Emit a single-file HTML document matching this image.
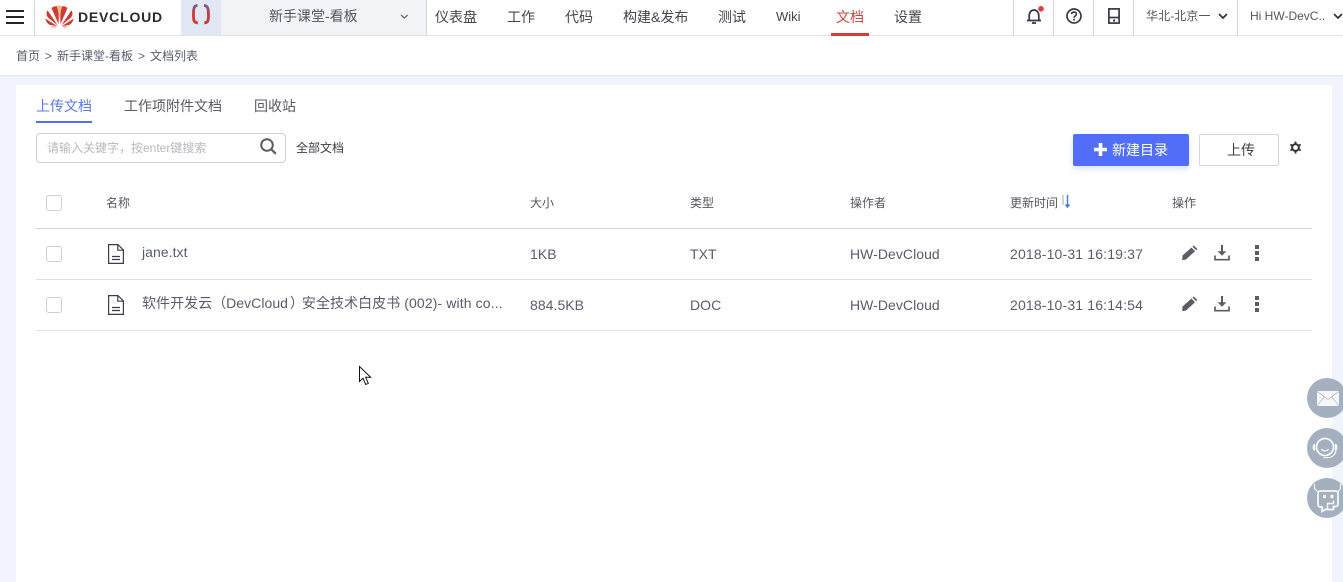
<!DOCTYPE html>
<html lang="zh"><head><meta charset="utf-8"><title>DevCloud</title>
<style>
*{box-sizing:border-box}
html,body{margin:0;padding:0;width:1343px;height:582px;overflow:hidden;background:#fff}
body{position:relative;font-family:"Liberation Sans","Noto Sans CJK SC",sans-serif;color:#43454f;font-size:13px}
.a{position:absolute;white-space:nowrap;line-height:18px}
.b{position:absolute}
.nav{top:8px;font-size:14px;color:#43454f}
.th{top:194px;font-size:12px;color:#555761}
.td{font-size:14px;color:#575d6c;letter-spacing:.05px}
.time{letter-spacing:.16px}
.bc{top:47px;font-size:12px;color:#575d6c}
.sep{position:absolute;top:0;width:1px;height:35px;background:#d4d4d6}
.cb{position:absolute;left:46px;width:16px;height:16px;border:1px solid #cfcfd3;border-radius:3px;background:#fff}
.p{letter-spacing:-2px}
svg{position:absolute;overflow:visible}
</style></head><body>

<!-- background -->
<div class="b" style="left:0;top:35px;width:1343px;height:1px;background:#e3e3e5"></div>
<div class="b" style="left:0;top:75px;width:1343px;height:507px;background:#f1f4fd"></div>
<div class="b" style="left:0;top:75px;width:1343px;height:1px;background:#e2e5f1"></div>
<div class="b" style="left:16px;top:85px;width:1316px;height:497px;background:#fff"></div>

<!-- header -->
<svg style="left:6px;top:10px" width="19" height="14"><path d="M0 1h18M0 7h18M0 13h18" stroke="#24262e" stroke-width="2"/></svg>
<div class="sep" style="left:34px"></div>
<svg style="left:45px;top:5px" width="29" height="22" viewBox="0 0 29 22">
<path d="M12.800 20.500 3 12.500C1 10 1.200 7 2.700 5.500Z" fill="#d3382f"/>
<path d="M13.500 19 6.500 3C8.500 1.400 10.800 1 12 1.500 13.800 7 14 13 13.500 19Z" fill="#d3382f"/>
<path d="M15.500 19C15 13 15.200 7 17 1.500 18.200 1 20.500 1.400 22.500 3Z" fill="#d3382f"/>
<path d="M16.200 20.500 26 12.500C28 10 27.800 7 26.300 5.500Z" fill="#d3382f"/>
<path d="M12 21 .3 13.500C.8 16 2.500 19 5 20Z" fill="#d3382f"/>
<path d="M17 21 28.700 13.500C28.200 16 26.500 19 24 20Z" fill="#d3382f"/>
<path d="M12.500 21.600H5.800c1.800 1 4.500.7 6.700 0ZM16.500 21.600h6.700c-1.800 1-4.500.7-6.700 0Z" fill="#d3382f"/>
<path d="M12.300 1.200C13.500.3 15.500.3 16.700 1.200 16 6 15 10 14.500 14 14 10 13 6 12.300 1.200Z" fill="#e8b98a"/>
</svg>
<div class="a" style="left:78px;top:8px;font-size:14px;font-weight:bold;letter-spacing:.8px;color:#2a2b31">DEVCLOUD</div>
<div class="b" style="left:181px;top:0;width:40px;height:35px;background:#e1e8f3"></div>
<div class="b" style="left:221px;top:0;width:205px;height:35px;background:#f1f4f6"></div>
<svg style="left:190px;top:4px" width="22" height="20" viewBox="0 0 22 20" fill="none">
<path d="M7.500 1.500C4.500 1.500 3.800 3.500 3.600 7 3.300 11 3.300 14 4 16.500 4.600 18.300 6 18.800 7.800 18.800" stroke="#cf3a34" stroke-width="2.800"/>
<path d="M14 1.500C17 1.500 18 3.500 18.300 7 18.600 11 18.600 14 18 16.500 17.400 18.300 16 18.800 14.300 18.800" stroke="#c63c3a" stroke-width="2.800"/>
<path d="M3.300 5.500C3.800 3 5 1.500 7 1.300M14.500 1.300C16.500 1.500 18 3 18.400 5.500" stroke="#3d6fc0" stroke-width="1.500"/>
<path d="M6.500 20.500h2M13.500 20.500h2" stroke="#c5ccd8" stroke-width="1"/>
</svg>
<div class="a" style="left:269px;top:7px;font-size:14px;color:#54565f">新手课堂-看板</div>
<svg style="left:400px;top:14px" width="9" height="6"><path d="M1 1l3.300 3L7.600 1" fill="none" stroke="#6d7078" stroke-width="1.400"/></svg>
<div class="sep" style="left:426px"></div>

<div class="a nav" style="left:435px">仪表盘</div>
<div class="a nav" style="left:507px">工作</div>
<div class="a nav" style="left:565px">代码</div>
<div class="a nav" style="left:623px">构建&amp;发布</div>
<div class="a nav" style="left:718px">测试</div>
<div class="a nav" style="left:776px;font-size:13px">Wiki</div>
<div class="a nav" style="left:836px;color:#c9473f">文档</div>
<div class="b" style="left:831px;top:33px;width:38px;height:3px;background:#d63b37"></div>
<div class="a nav" style="left:894px">设置</div>

<div class="sep" style="left:1013px"></div>
<div class="sep" style="left:1053px"></div>
<div class="sep" style="left:1093px"></div>
<div class="sep" style="left:1133px"></div>
<div class="sep" style="left:1237px"></div>
<svg style="left:1026px;top:6px" width="20" height="18" viewBox="0 0 20 18" fill="none">
<path d="M1 14.500h14M3.200 14.500V10C3.200 6.500 5 4 8 4s4.800 2.500 4.800 6v4.500M6 17h4" stroke="#363846" stroke-width="1.700"/>
<circle cx="15" cy="2.800" r="2.800" fill="#d9403a"/>
</svg>
<svg style="left:1066px;top:8px" width="16" height="16" viewBox="0 0 16 16" fill="none">
<circle cx="8" cy="8" r="7" stroke="#363846" stroke-width="1.700"/>
<path d="M5.600 6.200C5.700 4.800 6.700 4.100 8 4.100c1.400 0 2.400.8 2.400 2 0 1.700-2.400 1.800-2.400 3.600" stroke="#363846" stroke-width="1.600"/>
<rect x="7.200" y="10.800" width="1.700" height="1.700" fill="#363846"/>
</svg>
<svg style="left:1108px;top:8px" width="12" height="16" viewBox="0 0 12 16" fill="none">
<rect x=".9" y=".9" width="10.200" height="14.200" stroke="#363846" stroke-width="1.700"/>
<path d="M1 9.500h10" stroke="#363846" stroke-width="1.700"/>
<rect x="5" y="11.500" width="2" height="2" fill="#363846"/>
</svg>
<div class="a" style="left:1146px;top:7px;font-size:12px;letter-spacing:.1px;color:#54565f">华北-北京一</div>
<svg style="left:1218px;top:13px" width="10" height="7"><path d="M1 1l4 4 4-4" fill="none" stroke="#30323c" stroke-width="1.700"/></svg>
<div class="a" style="left:1250px;top:7px;font-size:12px;color:#54565f">Hi HW-DevC..</div>
<svg style="left:1333px;top:13px" width="10" height="7"><path d="M1 1l4 4 4-4" fill="none" stroke="#30323c" stroke-width="1.700"/></svg>

<!-- breadcrumb -->
<div class="a bc" style="left:16px">首页</div>
<div class="a bc" style="left:45px">&gt;</div>
<div class="a bc" style="left:57px">新手课堂-看板</div>
<div class="a bc" style="left:138px">&gt;</div>
<div class="a bc" style="left:150px">文档列表</div>

<!-- tabs -->
<div class="a" style="left:36px;top:97px;font-size:14px;color:#5a78f0">上传文档</div>
<div class="b" style="left:36px;top:121px;width:56px;height:2px;background:#526ef6"></div>
<div class="a" style="left:124px;top:97px;font-size:14px;color:#595a62">工作项附件文档</div>
<div class="a" style="left:254px;top:97px;font-size:14px;color:#595a62">回收站</div>

<!-- search -->
<div class="b" style="left:36px;top:133px;width:250px;height:30px;border:1px solid #cfcfd3;border-radius:4px;background:#fff"></div>
<div class="a" style="left:47px;top:139px;font-size:12px;color:#b8b9bd">请输入关键字，按enter键搜索</div>
<svg style="left:260px;top:138px" width="17" height="17" viewBox="0 0 17 17" fill="none">
<circle cx="7" cy="7" r="5.800" stroke="#5b5c66" stroke-width="2"/>
<path d="M11.500 11.500l4.300 4.300" stroke="#5b5c66" stroke-width="2.200"/>
</svg>
<div class="a" style="left:296px;top:139px;font-size:12px;color:#3c3d44">全部文档</div>

<!-- buttons -->
<div class="b" style="left:1073px;top:134px;width:116px;height:32px;background:#526ef9;border-radius:2px;box-shadow:0 3px 6px rgba(82,110,249,.2)"></div>
<svg style="left:1094px;top:143px" width="13" height="13"><path d="M6.500 0v13M0 6.500h13" stroke="#fff" stroke-width="3.600"/></svg>
<div class="a" style="left:1112px;top:141px;font-size:14px;color:#fff">新建目录</div>
<div class="b" style="left:1199px;top:134px;width:80px;height:32px;border:1px solid #d3d6dc;border-radius:2px;background:#fff"></div>
<div class="a" style="left:1227px;top:141px;font-size:14px;color:#3f4049">上传</div>
<svg style="left:1289px;top:141px" width="13" height="13" viewBox="0 0 13 13" fill="none">
<circle cx="6.500" cy="6.500" r="3.400" stroke="#32343e" stroke-width="2"/>
<path d="M6.500 .5v2M6.500 10.500v2M1.300 3.500l1.800 1M9.900 8.500l1.800 1M1.300 9.500l1.800-1M9.900 4.500l1.800-1" stroke="#32343e" stroke-width="1.800"/>
</svg>

<!-- table head -->
<div class="cb" style="top:195px"></div>
<div class="a th" style="left:106px">名称</div>
<div class="a th" style="left:530px">大小</div>
<div class="a th" style="left:690px">类型</div>
<div class="a th" style="left:850px">操作者</div>
<div class="a th" style="left:1010px">更新时间</div>
<svg style="left:1061px;top:194px" width="11" height="15" fill="none"><path d="M2 1v10" stroke="#c3c6cc" stroke-width="1.500"/><path d="M6.500 1v12M4.500 10.500l2 2.500 2-2.500" stroke="#4a7fd1" stroke-width="1.500"/></svg>
<div class="a th" style="left:1172px">操作</div>
<div class="b" style="left:36px;top:228px;width:1276px;height:1px;background:#d3d3da"></div>

<!-- row 1 -->
<div class="cb" style="top:246px"></div>
<svg style="left:108px;top:244px" width="16" height="20" viewBox="0 0 16 20" fill="none" stroke="#3c3e4d" stroke-width="1.200">
<path d="M.6.600h9.400l5.400 5.400v13.400H.6Z"/><path d="M9.800.6v5.600h5.600M4 12.500h8M4 15.500h8"/>
</svg>
<div class="a td" style="left:142px;top:243px">jane.txt</div>
<div class="a td" style="left:530px;top:245px">1KB</div>
<div class="a td" style="left:690px;top:245px">TXT</div>
<div class="a td" style="left:850px;top:245px">HW-DevCloud</div>
<div class="a td time" style="left:1010px;top:245px">2018-10-31 16:19:37</div>
<svg style="left:1181px;top:245px" width="17" height="16" viewBox="0 0 17 16"><path d="M1.500 10.500 10.500 2.500 14 6.200 5 14.500l-3.800.8ZM11.500 1.600l1.300-1.200 3.500 3.600-1.200 1.300Z" fill="#5b5d66"/></svg>
<svg style="left:1214px;top:245px" width="16" height="16" viewBox="0 0 16 16" fill="none"><path d="M8 0v9" stroke="#5b5d66" stroke-width="2"/><path d="M3.600 6.200 8 10.800l4.400-4.600Z" fill="#5b5d66"/><path d="M1 10.500v4.200h14v-4.200" stroke="#5b5d66" stroke-width="1.700"/></svg>
<svg style="left:1255px;top:245px" width="4" height="16"><path d="M0 0h4v4H0ZM0 6h4v4H0ZM0 12h4v4H0Z" fill="#5b5d66"/></svg>
<div class="b" style="left:36px;top:279px;width:1276px;height:1px;background:#e1e1e3"></div>

<!-- row 2 -->
<div class="cb" style="top:297px"></div>
<svg style="left:108px;top:295px" width="16" height="20" viewBox="0 0 16 20" fill="none" stroke="#3c3e4d" stroke-width="1.200">
<path d="M.6.600h9.400l5.400 5.400v13.400H.6Z"/><path d="M9.800.6v5.600h5.600M4 12.500h8M4 15.500h8"/>
</svg>
<div class="a td" style="left:142px;top:294px">软件开发云<span class="p">（ </span>DevCloud<span class="p"> ）</span>安全技术白皮书 <span style="letter-spacing:.12px">(002)- with co...</span></div>
<div class="a td" style="left:530px;top:296px">884.5KB</div>
<div class="a td" style="left:690px;top:296px">DOC</div>
<div class="a td" style="left:850px;top:296px">HW-DevCloud</div>
<div class="a td time" style="left:1010px;top:296px">2018-10-31 16:14:54</div>
<svg style="left:1181px;top:296px" width="17" height="16" viewBox="0 0 17 16"><path d="M1.500 10.500 10.500 2.500 14 6.200 5 14.500l-3.800.8ZM11.500 1.600l1.300-1.200 3.500 3.600-1.200 1.300Z" fill="#5b5d66"/></svg>
<svg style="left:1214px;top:296px" width="16" height="16" viewBox="0 0 16 16" fill="none"><path d="M8 0v9" stroke="#5b5d66" stroke-width="2"/><path d="M3.600 6.200 8 10.800l4.400-4.600Z" fill="#5b5d66"/><path d="M1 10.500v4.200h14v-4.200" stroke="#5b5d66" stroke-width="1.700"/></svg>
<svg style="left:1255px;top:296px" width="4" height="16"><path d="M0 0h4v4H0ZM0 6h4v4H0ZM0 12h4v4H0Z" fill="#5b5d66"/></svg>
<div class="b" style="left:36px;top:330px;width:1276px;height:1px;background:#e1e1e3"></div>

<!-- cursor -->
<svg style="left:359px;top:366px" width="13" height="20" viewBox="0 0 13 20"><path d="M.5.500v15l3.500-3.300 2.700 6.300 2.600-1.100-2.600-6.100h5Z" fill="#fff" stroke="#111" stroke-width="1"/></svg>

<!-- floating: mail -->
<div class="b" style="left:1307px;top:378px;width:40px;height:40px;border-radius:50%;background:#a5b0bf"></div>
<svg style="left:1317px;top:391px" width="22" height="15" fill="none"><rect width="22" height="15" fill="#f6f7f9"/><path d="M0 .5l11 8 11-8M0 15l7.500-9.500M22 15l-7.500-9.500" stroke="#b4bdca" stroke-width=".8"/></svg>
<!-- floating: support -->
<div class="b" style="left:1307px;top:428px;width:40px;height:40px;border-radius:50%;background:#a5b0bf"></div>
<svg style="left:1312px;top:433px" width="30" height="30" viewBox="0 0 30 30" fill="none" stroke="#f6f7f9">
<circle cx="13" cy="14" r="8.500" stroke-width="1.800"/>
<path d="M9.500 16c1 2.500 6 2.500 7 0" stroke-width="1.300"/>
<path d="M3 11.500c-1.600 1-1.600 4.500 0 5.500" stroke-width="2.400"/>
<path d="M23 11.500c1.600 1 1.600 4.500 0 5.500" stroke-width="2.400"/>
<path d="M24 17.500c-.5 4-4 7-8 7.200h-4.500" stroke-width="1.200"/>
</svg>
<!-- floating: bot -->
<div class="b" style="left:1307px;top:478px;width:40px;height:40px;border-radius:50%;background:#a5b0bf"></div>
<svg style="left:1312px;top:486px" width="31" height="27" viewBox="0 0 31 27" fill="none" stroke="#f6f7f9" stroke-width="1.800">
<path d="M8.500 5h15c1.500 0 2.500 1 2.500 2.500V18c0 1.500-1 2.500-2.500 2.500H21.500v3H13l-3 2V21H8.500C7 21 6 20 6 18.500v-11C6 6 7 5 8.500 5Z"/>
<path d="M2.500 -2v4.500L6 6M28.500 -2v4.500L26 6" stroke-width="1.100"/>
<rect x="11" y="8.800" width="3" height="3.400" fill="#f6f7f9" stroke="none"/>
<rect x="18.500" y="8.800" width="3" height="3.400" fill="#f6f7f9" stroke="none"/>
<path d="M15.500 23.500v-6h6v-3" stroke-width="1.500"/>
</svg>
</body></html>
